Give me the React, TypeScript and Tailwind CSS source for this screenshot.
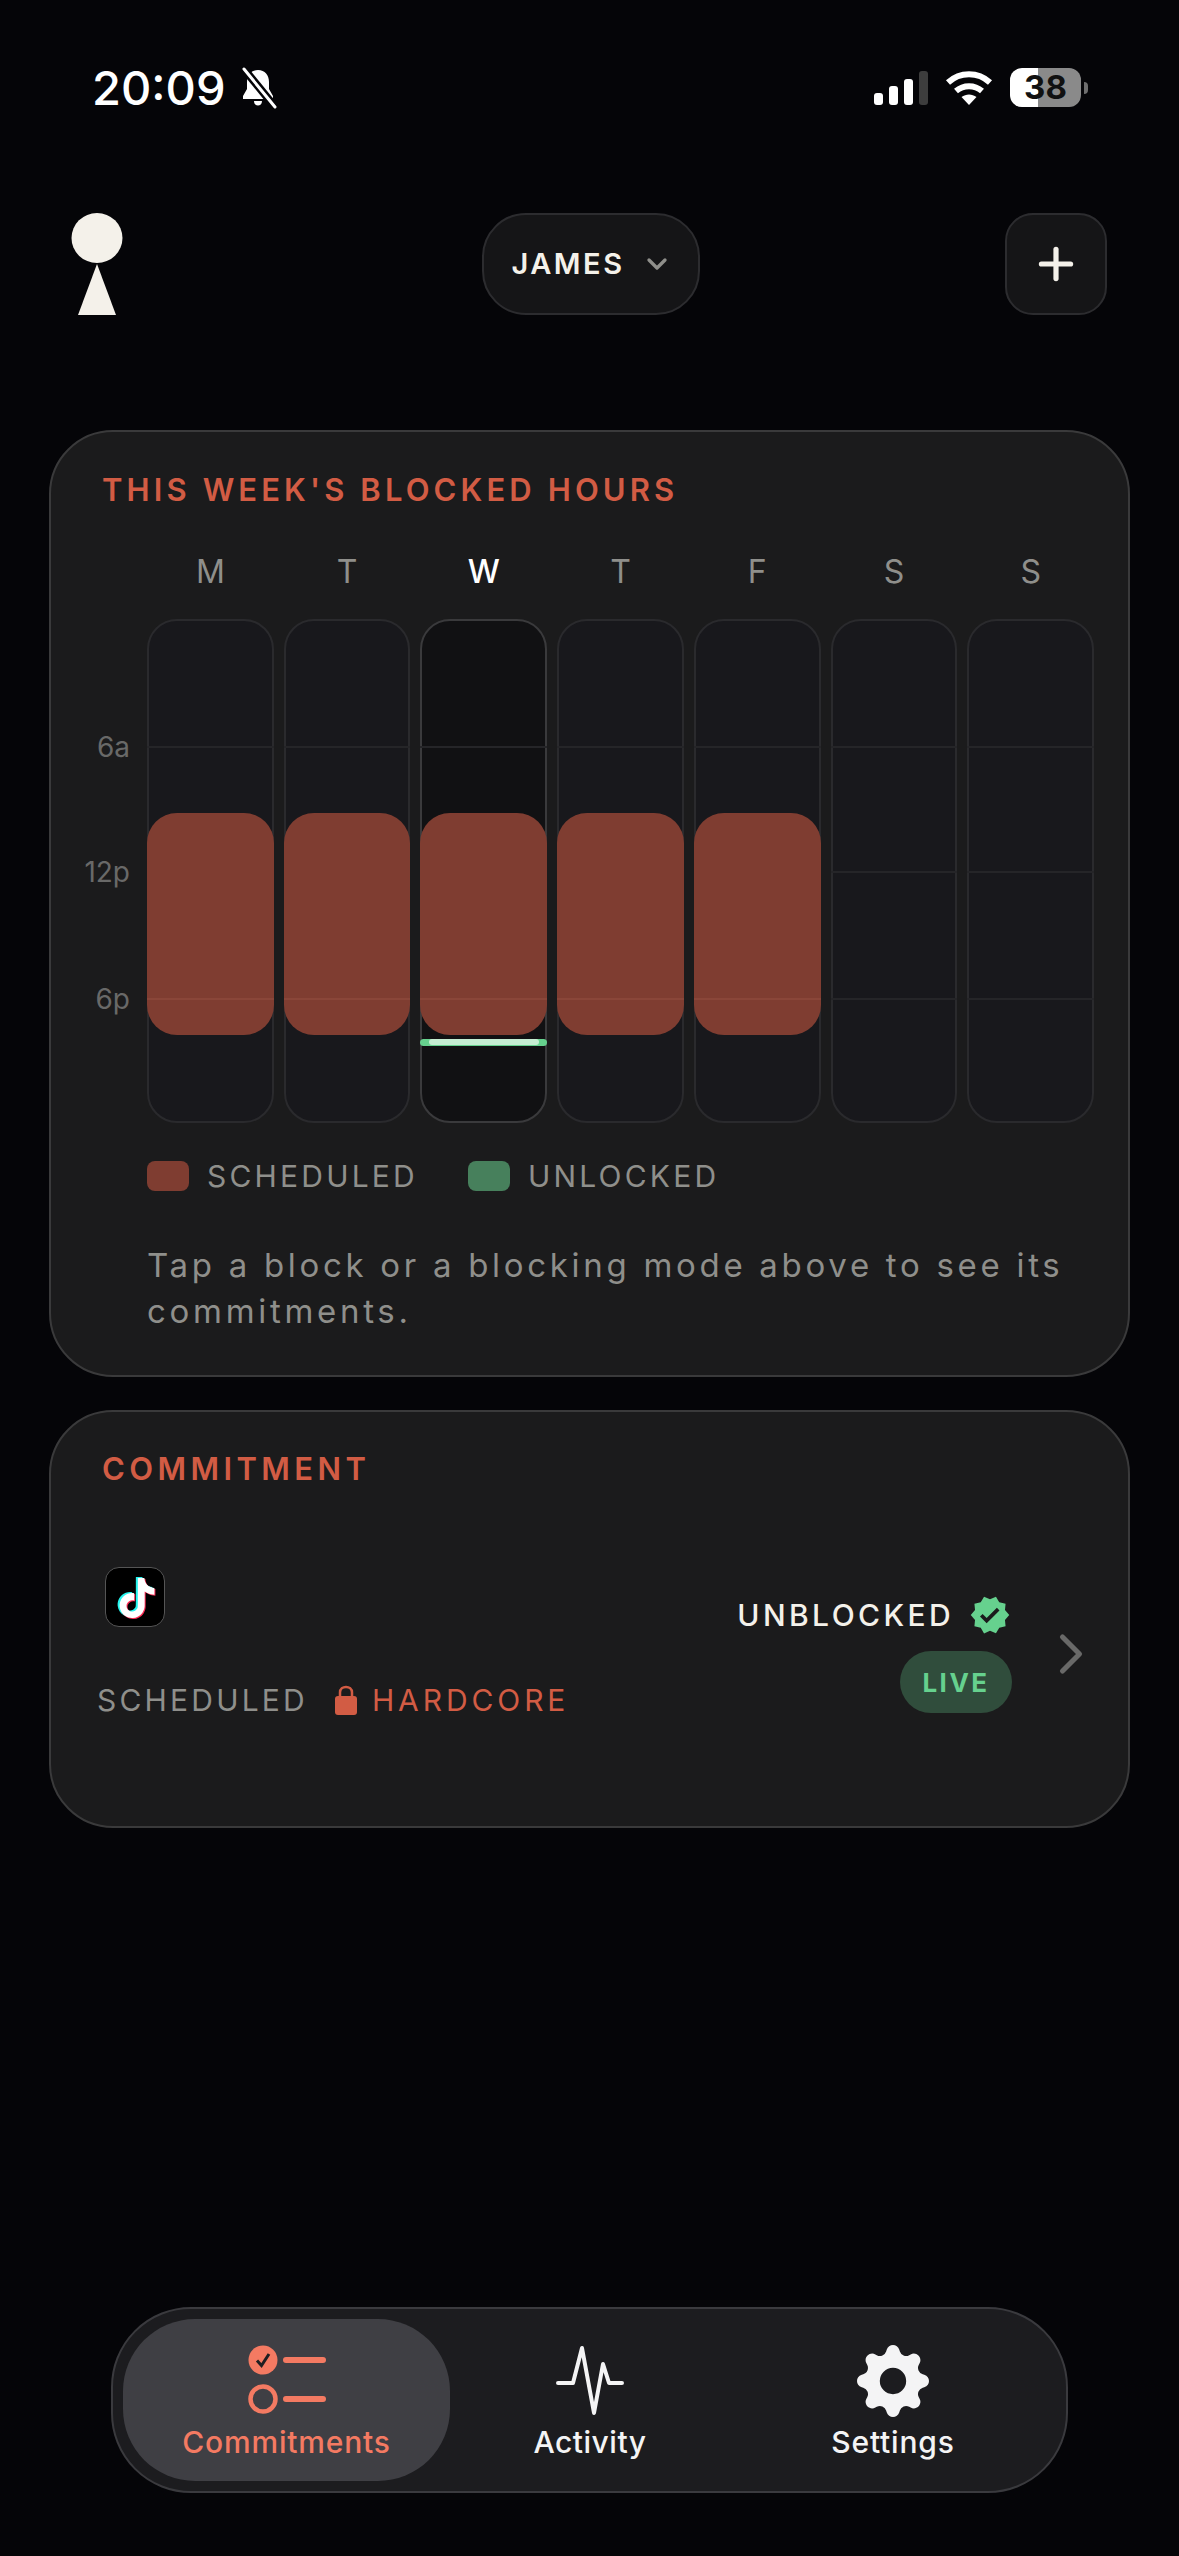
import { BsGearFill } from 'react-icons/bs'
import { MdVerified } from 'react-icons/md'
import { SiTiktok } from 'react-icons/si'
import { ChevronDown, ChevronRight, Plus } from 'lucide-react'

const days = ['M', 'T', 'W', 'T', 'F', 'S', 'S']

function MutedBell() {
  return (
    <svg width="40" height="42" viewBox="0 0 40 42">
      <path d="M19 3C12 3 8 8 8 15V22L4 29V32H34V29L30 22V15C30 8 26 3 19 3Z" fill="white" />
      <path d="M15 34H23C23 40 15 40 15 34Z" fill="white" />
      <path d="M5 2L36 40" stroke="#050508" strokeWidth="8" />
      <path d="M5 2L36 40" stroke="white" strokeWidth="3" strokeLinecap="round" />
    </svg>
  )
}

function StatusBar() {
  return (
    <div className="flex h-[39px] items-center justify-between pl-[92px] pr-[91px]">
      <div className="flex items-center gap-[13px]">
        <span className="text-[47px] font-medium leading-none text-white">20:09</span>
        <MutedBell />
      </div>
      <div className="flex items-center">
        <div className="flex h-[34px] items-end gap-[6px]">
          <div className="h-[12px] w-[9px] rounded-[3px] bg-white" />
          <div className="h-[19px] w-[9px] rounded-[3px] bg-white" />
          <div className="h-[26px] w-[9px] rounded-[3px] bg-white" />
          <div className="h-[34px] w-[9px] rounded-[3px] bg-[#3d3d3d]" />
        </div>
        <svg width="48" height="36" viewBox="0 0 48 36" className="ml-[17px]" fill="none" stroke="white" strokeWidth="6">
          <path d="M3 12.5C15 1.5 33 1.5 45 12.5" />
          <path d="M11 21C18.500 14.500 29.500 14.500 37 21" />
          <path d="M24 35L16.500 27C21 23.500 27 23.500 31.500 27Z" fill="white" stroke="none" />
        </svg>
        <div className="ml-[17px] flex h-[39px] w-[71px] items-center justify-center rounded-[12px] bg-[linear-gradient(90deg,#ffffff_40%,#8a8a8a_40%)] text-[33px] font-bold leading-none text-[#111]">
          38
        </div>
        <div className="ml-[3px] h-[12px] w-[4px] rounded-r-full bg-[#6e6e6e]" />
      </div>
    </div>
  )
}

function Header() {
  return (
    <div className="mt-[106px] flex h-[102px] items-center justify-between pl-[71px] pr-[72px]">
      <svg width="52" height="102" viewBox="0 0 52 102">
        <ellipse cx="26" cy="25" rx="25.500" ry="25" fill="#f4f1ea" />
        <path d="M26 51L45 102H7Z" fill="#f4f1ea" />
      </svg>
      <button className="ml-[53px] flex h-[102px] w-[218px] items-center justify-center gap-[16px] rounded-[44px] border-2 border-[#2c2c2f] bg-[#151517] pl-[3px]">
        <span className="text-[29px] font-semibold tracking-[2.500px] text-[#f4f1ea]">JAMES</span>
        <ChevronDown size={32} strokeWidth={2.500} className="text-[#8f8f8b]" />
      </button>
      <button className="flex h-[102px] w-[102px] items-center justify-center rounded-[28px] border-2 border-[#2c2c2f] bg-[#151517]">
        <Plus size={50} strokeWidth={2.500} className="text-[#f4f1ea]" />
      </button>
    </div>
  )
}

function WeekCard() {
  return (
    <section className="mx-[49px] mt-[115px] h-[947px] rounded-[64px] border-2 border-[#3a3a3b] bg-[#1b1b1c] pl-[51px] pr-[34px] pt-[35px]">
      <h2 className="text-[31px] font-semibold leading-[46px] tracking-[4.100px] text-[#d25c44]">THIS WEEK'S BLOCKED HOURS</h2>
      <div className="relative ml-[45px] mt-[36px]">
        <div className="grid grid-cols-7 gap-[10px]">
          {days.map((d, i) => (
            <div key={i} className={`h-[46px] text-center text-[32px] leading-[46px] ${i === 2 ? 'text-white font-medium' : 'text-[#8f8f8b]'}`}>
              {d}
            </div>
          ))}
        </div>
        <div className="absolute left-[-77px] top-[180px] w-[60px] text-right text-[28px] leading-[36px] text-[#696968]">6a</div>
        <div className="absolute left-[-77px] top-[305px] w-[60px] text-right text-[28px] leading-[36px] text-[#696968]">12p</div>
        <div className="absolute left-[-77px] top-[432px] w-[60px] text-right text-[28px] leading-[36px] text-[#696968]">6p</div>
        <div className="mt-[24px] grid grid-cols-7 gap-[10px]">
          {days.map((d, i) => (
            <div
              key={i}
              className={`relative h-[504px] rounded-[30px] border-2 ${i === 2 ? 'border-[#3a3a3c] bg-[#111113]' : 'border-[#2a2a2d] bg-[#18181c]'}`}
            >
              <div className="absolute inset-x-[-2px] top-[125px] h-[2px] bg-[#252528]" />
              <div className="absolute inset-x-[-2px] top-[250px] h-[2px] bg-[#252528]" />
              <div className="absolute inset-x-[-2px] top-[377px] h-[2px] bg-[#252528]" />
              {i < 5 && (
                <div className="absolute inset-x-[-2px] top-[192px] h-[222px] rounded-[30px] bg-[#7f3d31]">
                  <div className="absolute inset-x-0 top-[185px] h-[2px] bg-[#8a4639]" />
                </div>
              )}
              {i === 2 && (
                <div className="absolute inset-x-[-2px] top-[418px] flex h-[7px] justify-center rounded-full bg-[#66d18e]">
                  <div className="h-[6px] w-[110px] rounded-full bg-[#c5edd2]" />
                </div>
              )}
            </div>
          ))}
        </div>
        <div className="mt-[38px] flex h-[30px] items-center text-[30px] tracking-[3.200px] text-[#8f8f8b]">
          <div className="h-[30px] w-[42px] rounded-[8px] bg-[#7f3d31]" />
          <span className="ml-[18px]">SCHEDULED</span>
          <div className="ml-[50px] h-[30px] w-[42px] rounded-[8px] bg-[#47805c]" />
          <span className="ml-[18px]">UNLOCKED</span>
        </div>
        <p className="mt-[51px] text-[33px] leading-[46px] tracking-[3.700px] text-[#8f8f8b]">
          Tap a block or a blocking mode above to see its commitments.
        </p>
      </div>
    </section>
  )
}

function TikTokIcon() {
  return (
    <div className="relative flex h-[60px] w-[60px] items-center justify-center rounded-[14px] border border-[#555] bg-black">
      <SiTiktok size={40} className="absolute left-[9px] top-[9px] text-[#25f4ee]" />
      <SiTiktok size={40} className="absolute left-[12px] top-[11px] text-[#fe2c55]" />
      <SiTiktok size={40} className="absolute left-[10.500px] top-[10px] text-white" />
    </div>
  )
}

function CommitmentCard() {
  return (
    <section className="mx-[49px] mt-[33px] h-[418px] rounded-[64px] border-2 border-[#3a3a3b] bg-[#1b1b1c] pl-[46px] pr-[47px] pt-[34px]">
      <h2 className="ml-[5px] text-[31px] font-semibold leading-[46px] tracking-[4.400px] text-[#d25c44]">COMMITMENT</h2>
      <div className="mt-[26px] flex items-start justify-between">
        <div>
          <div className="ml-[8px] mt-[49px]">
            <TikTokIcon />
          </div>
          <div className="mt-[55px] flex items-center text-[30px] leading-[36px] tracking-[3.200px]">
            <span className="text-[#8f8f8b]">SCHEDULED</span>
            <svg width="24" height="32" viewBox="0 0 24 32" className="ml-[26px]">
              <path d="M6 14V8.500C6 1 18 1 18 8.500V14" fill="none" stroke="#d25c44" strokeWidth="2.500" />
              <rect x="1" y="12" width="22" height="19" rx="3" fill="#d25c44" />
            </svg>
            <span className="ml-[14px] tracking-[3.900px] text-[#d25c44]">HARDCORE</span>
          </div>
        </div>
        <div className="mt-[76px] flex items-center">
          <div className="flex flex-col items-end">
            <div className="flex items-center">
              <span className="text-[30px] font-medium leading-[36px] tracking-[3.400px] text-[#f4f1ea]">UNBLOCKED</span>
              <MdVerified size={42} className="ml-[15px] mr-[1px] text-[#66d18e]" />
            </div>
            <div className="mt-[15px] flex h-[62px] w-[112px] items-center justify-center rounded-full bg-[#304d3c] text-[26px] font-bold tracking-[2.500px] text-[#66d18e]">
              LIVE
            </div>
          </div>
          <ChevronRight size={68} strokeWidth={1.800} className="ml-[25px] mr-[-24px] text-[#696968]" />
        </div>
      </div>
    </section>
  )
}

function ChecklistIcon() {
  return (
    <svg width="78" height="70" viewBox="0 0 78 70" fill="none">
      <circle cx="15" cy="15" r="14.500" fill="#f47a62" />
      <path d="M9 15.500L13.500 20.500L21 9" stroke="#1f1f21" strokeWidth="3" />
      <path d="M38 15H75" stroke="#f47a62" strokeWidth="6" strokeLinecap="round" />
      <circle cx="15" cy="54" r="12.500" stroke="#f47a62" strokeWidth="4.500" />
      <path d="M38 54H75" stroke="#f47a62" strokeWidth="6" strokeLinecap="round" />
    </svg>
  )
}

function PulseIcon() {
  return (
    <svg width="68" height="72" viewBox="0 0 68 72" fill="none">
      <path
        d="M2 38H17L26 3L38 68L47 19L53 38H66"
        stroke="#f4f4f5"
        strokeWidth="4"
        strokeLinecap="round"
        strokeLinejoin="round"
      />
    </svg>
  )
}

function BottomNav() {
  return (
    <nav className="absolute left-[111px] top-[2307px] flex h-[186px] w-[957px] items-center rounded-[80px] border-2 border-[#3a3a3e] bg-[#1c1c1f] pl-[10px]">
      <div className="flex h-[162px] w-[327px] flex-col items-center rounded-[72px] bg-[#3f3f44] pt-[26px]">
        <ChecklistIcon />
        <span className="mt-[9px] text-[30px] font-medium leading-[36px] tracking-[0.800px] text-[#f47a62]">Commitments</span>
      </div>
      <div className="flex w-[280px] flex-col items-center pt-[4px]">
        <PulseIcon />
        <span className="mt-[7px] text-[30px] font-medium leading-[36px] tracking-[0.500px] text-[#f4f4f5]">Activity</span>
      </div>
      <div className="flex w-[326px] flex-col items-center pt-[4px]">
        <BsGearFill size={72} className="text-[#f4f4f5]" />
        <span className="mt-[7px] text-[30px] font-medium leading-[36px] tracking-[0.800px] text-[#f4f4f5]">Settings</span>
      </div>
    </nav>
  )
}

export default function App() {
  return (
    <div className="relative h-[2556px] w-[1179px] overflow-hidden bg-[#050508] pt-[68px] font-['Inter',sans-serif]">
      <StatusBar />
      <Header />
      <WeekCard />
      <CommitmentCard />
      <BottomNav />
    </div>
  )
}
